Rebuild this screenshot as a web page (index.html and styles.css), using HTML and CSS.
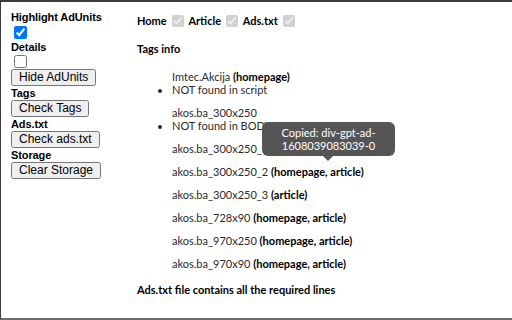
FILE: index.html
```html
<!DOCTYPE html>
<html lang="en">
  <head>
    <meta charset="UTF-8" />
    <title>AdUnits</title>
    <link rel="stylesheet" href="styles.css">
  </head>
  <body>
    <div class="frame">
      <div class="controls">
        <label for="highlight">Highlight AdUnits</label>
        <input type="checkbox" id="highlight" checked />
        <label for="details">Details</label>
        <input type="checkbox" id="details" class="second" />
        <button type="button">Hide AdUnits</button>
        <label>Tags</label>
        <button type="button">Check Tags</button>
        <label>Ads.txt</label>
        <button type="button">Check ads.txt</button>
        <label>Storage</label>
        <button type="button">Clear Storage</button>
      </div>
      <div class="report">
        <div class="pages">
          <b>Home</b> <input type="checkbox" checked disabled />
          <b>Article</b> <input type="checkbox" checked disabled />
          <b>Ads.txt</b> <input type="checkbox" checked disabled />
        </div>
        <h4 class="tags-title">Tags info</h4>
        <div class="tags">
          <div class="tag">
            Imtec.Akcija <b>(homepage)</b>
            <ul><li>NOT found in script</li></ul>
          </div>
          <div class="tag">
            akos.ba_300x250
            <ul><li>NOT found in BODY</li></ul>
          </div>
          <div class="tag">
            akos.ba_300x250_1 <b>(homepage, article)</b>
            <span class="tooltip">Copied: div-gpt-ad-<br>1608039083039-0</span>
          </div>
          <div class="tag">akos.ba_300x250_2 <b>(homepage, article)</b></div>
          <div class="tag">akos.ba_300x250_3 <b>(article)</b></div>
          <div class="tag">akos.ba_728x90 <b>(homepage, article)</b></div>
          <div class="tag">akos.ba_970x250 <b>(homepage, article)</b></div>
          <div class="tag">akos.ba_970x90 <b>(homepage, article)</b></div>
        </div>
        <h4 class="ads-title">Ads.txt file contains all the required lines</h4>
      </div>
    </div>
  </body>
</html>
```

FILE: styles.css
```css
body {
  margin: 0;
  background-color: #fff;
}

.frame {
  display: flex;
  height: 320px;
  box-sizing: border-box;
  border-top: 2px solid #3c3c3c;
  border-left: 1px solid #3c3c3c;
  border-bottom: 2px solid #6e6e6e;
  overflow: hidden;
}

.controls {
  display: flex;
  flex-direction: column;
  align-items: flex-start;
  width: 126px;
  padding: 8px 0 0 10px;
  font-family: "Liberation Sans", Arial, sans-serif;
  font-size: 11px;
}

.controls label {
  font-weight: bold;
  line-height: 14px;
  letter-spacing: -0.1px;
}

.controls input[type="checkbox"] {
  width: 13px;
  height: 13px;
  margin: 2px 0 1px 3px;
}

.controls input.second {
  margin-top: 1px;
}

.controls button {
  height: 17px;
  font-family: "Liberation Sans", Arial, sans-serif;
  font-size: 12px;
  line-height: 13px;
  padding: 0 6px;
  margin: 0;
}

.report {
  padding: 11.5px 0 0 0;
  font-family: Lato, "Noto Sans", sans-serif;
  font-size: 11px;
  line-height: 13px;
  color: #2a2a2a;
}

.pages {
  height: 14px;
  line-height: 14px;
}

.pages b {
  color: #000;
}

.pages input {
  width: 12px;
  height: 12px;
  margin: 0 2px;
  vertical-align: -2px;
}

h4 {
  font-size: 11px;
  line-height: 13px;
  color: #000;
}

.tags-title {
  margin: 14.5px 0 14.5px 0;
}

.ads-title {
  margin: 13px 0 0 0;
}

.tags {
  padding-left: 35px;
}

.tag {
  position: relative;
  margin-bottom: 10px;
}

.tag b {
  color: #000;
}

.tag ul {
  margin: 0 0 0 -12px;
  padding-left: 12px;
}

.tooltip {
  position: absolute;
  left: 90px;
  top: -19.5px;
  width: 133px;
  padding: 4px 0;
  background-color: #555;
  color: #fff;
  text-align: center;
  border-radius: 6px;
}

.tooltip::after {
  content: "";
  position: absolute;
  top: 100%;
  left: 61px;
  border: 5px solid transparent;
  border-top-color: #555;
}
```
